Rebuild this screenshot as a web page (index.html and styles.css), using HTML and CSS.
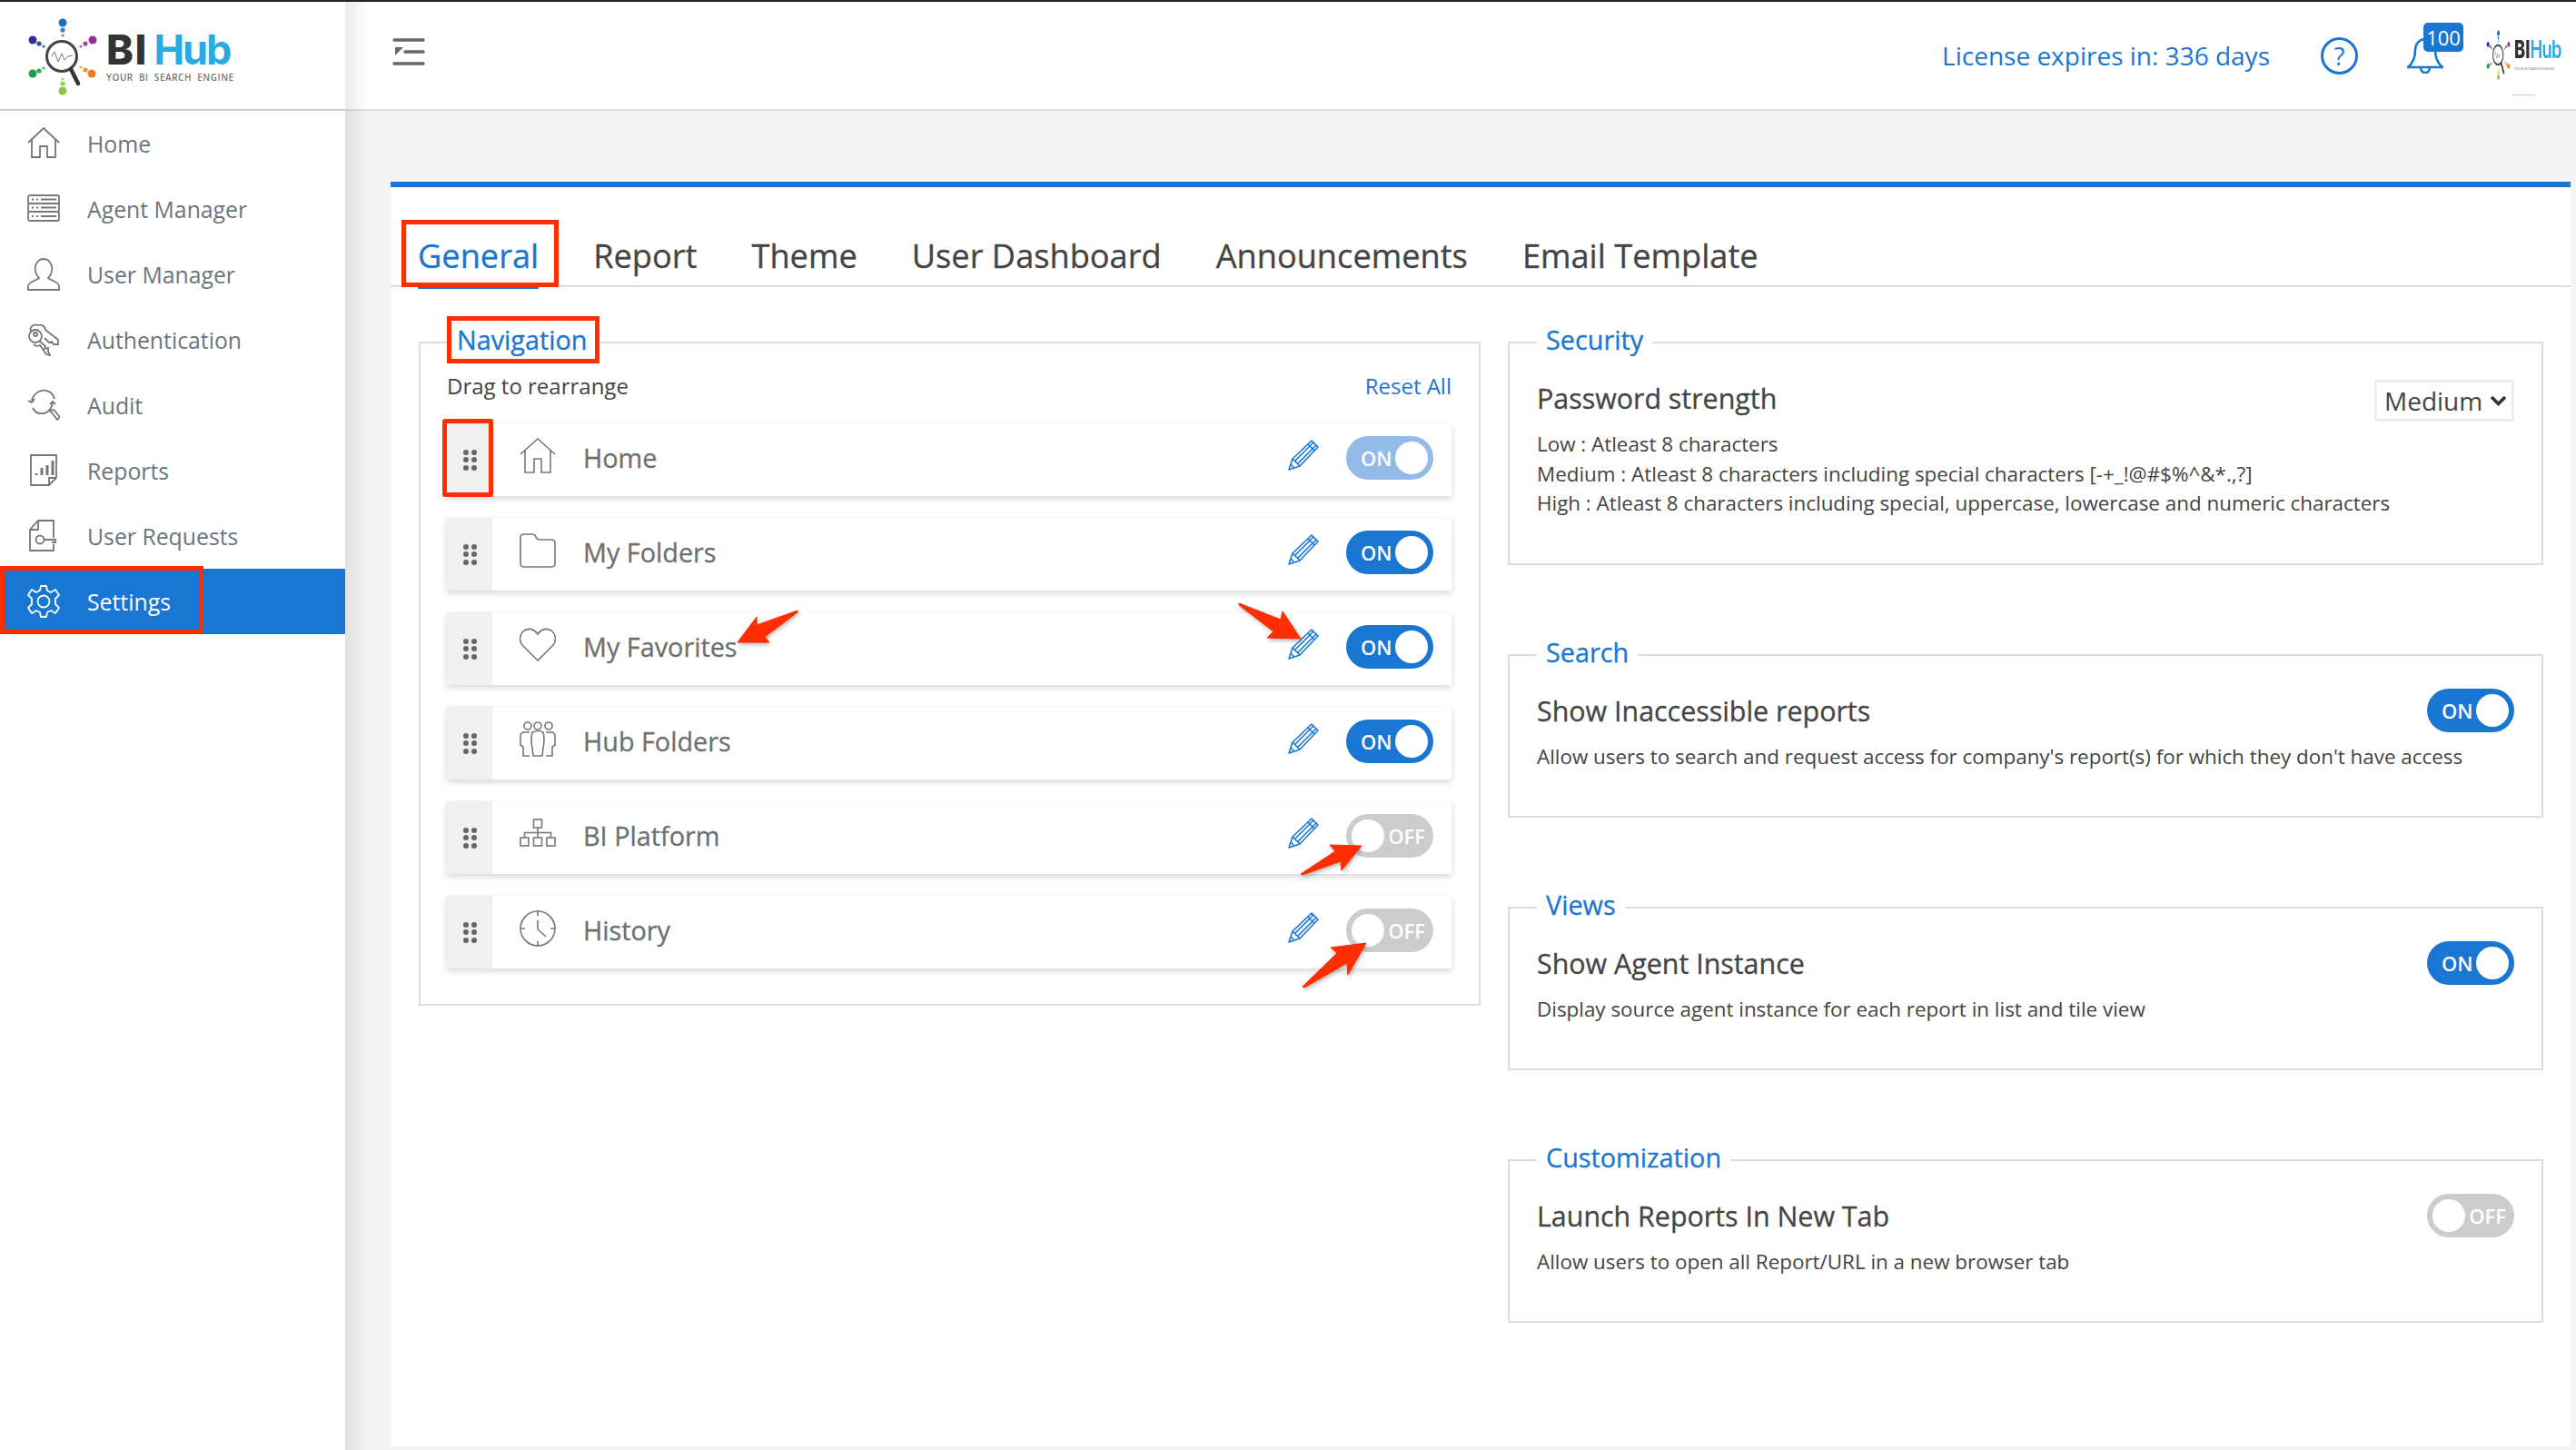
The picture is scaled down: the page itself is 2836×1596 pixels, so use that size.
FILE: index.html
```html
<!DOCTYPE html>
<html lang="en">
<head>
<meta charset="utf-8">
<title>BI Hub Settings</title>
<link rel="stylesheet" href="styles.css">
</head>
<body>
<svg class="defs" width="0" height="0">
  <defs>
    <g id="pencil" fill="none" stroke="#1976d2" stroke-width="1.6" stroke-linejoin="round">
      <path d="M1 33 L5 21 L26 1 L33 8 L13 29 Z"/>
      <path d="M5 21 L13 29 M8 23 L28 3 M11 26 L31 6 M22 5 L29 12 M3 27 L7 31"/>
    </g>
    <g id="logo-mark">
      <circle cx="69" cy="25" r="4.5" fill="#1f6fb5"/><circle cx="69" cy="33" r="2.6" fill="#2a86c8"/><circle cx="69" cy="39" r="1.6" fill="#2fa8dc"/>
      <circle cx="36" cy="44" r="4.5" fill="#2e3192"/><circle cx="43" cy="48" r="2.6" fill="#2e4da0"/><circle cx="48" cy="51" r="1.6" fill="#2a6db5"/>
      <circle cx="102" cy="44" r="4.5" fill="#93309a"/><circle cx="94" cy="48" r="2.6" fill="#a244a5"/><circle cx="89" cy="51" r="1.6" fill="#b060b0"/>
      <circle cx="36" cy="81" r="4.5" fill="#1e9b48"/><circle cx="43" cy="78" r="2.6" fill="#2ea84f"/><circle cx="48" cy="75" r="1.6" fill="#4cb85a"/>
      <circle cx="101" cy="81" r="4.5" fill="#f47b20"/><circle cx="94" cy="77" r="2.6" fill="#f79433"/><circle cx="89" cy="74" r="1.6" fill="#fab040"/>
      <circle cx="69" cy="100" r="4.5" fill="#8dc63f"/><circle cx="69" cy="92" r="2.6" fill="#9ccf45"/><circle cx="69" cy="87" r="1.6" fill="#bcd84a"/>
      <circle cx="68" cy="62" r="16.5" fill="#fff" stroke="#444" stroke-width="3"/>
      <path d="M78 76 L86 92" stroke="#333" stroke-width="4.5" stroke-linecap="round"/>
      <path d="M57 62 L60 57 L64 68 L68 59 L71 66 L75 62 L80 61" fill="none" stroke="#777" stroke-width="1"/>
    </g>
  </defs>
</svg>

<div class="topline"></div>
<div class="app">
  <aside class="sidebar">
    <div class="brand">
      <svg class="brand-mark" width="84" height="88" viewBox="24 18 84 88"><use href="#logo-mark"/></svg>
      <div class="brand-text">
        <div class="brand-name"><span class="bi">BI</span> <span class="hub">Hub</span></div>
        <div class="brand-tag">YOUR BI SEARCH ENGINE</div>
      </div>
    </div>
    <nav class="menu">
      <a class="menu-item">
        <svg class="menu-icon" viewBox="0 0 36 36"><path d="M1 17 L18 1 L35 17 M5 14 V33 H14 V21 H22 V33 H31 V14"/></svg>Home
      </a>
      <a class="menu-item">
        <svg class="menu-icon" viewBox="0 0 36 36"><rect x="1" y="3" width="34" height="9" rx="2"/><rect x="1" y="12" width="34" height="9" rx="2"/><rect x="1" y="21" width="34" height="10" rx="2"/><path d="M5 7.5 H7 M10 7.5 H12 M15 7.5 H32 M5 16.5 H7 M10 16.5 H12 M15 16.5 H32 M5 26 H7 M10 26 H12 M15 26 H32"/></svg>Agent Manager
      </a>
      <a class="menu-item">
        <svg class="menu-icon" viewBox="0 0 36 36"><path d="M1 35 H35 V31 C35 26 26 25 23 22 C26 19 28 15 27 9 C26 4 22 1 18 1 C14 1 10 4 9 9 C8 15 10 19 13 22 C10 25 1 26 1 31 Z"/></svg>User Manager
      </a>
      <a class="menu-item">
        <svg class="menu-icon" viewBox="0 0 36 36"><circle cx="9" cy="14" r="7"/><circle cx="9" cy="12" r="2"/><path d="M4 9 C2 3 8 0 12 2 C15 1 20 3 20 7 L34 18 V23 L29 23 L27 20 L24 21 L19 16 M13 19 L20 25 L19 28 L23 27 L23 31 L25 35 L21 34 L14 24 C12 25 9 25 7 23"/></svg>Authentication
      </a>
      <a class="menu-item">
        <svg class="menu-icon" viewBox="0 0 36 36"><path d="M1 13 L5 15 L8 11 M5 15 C5 6 14 0 21 2 C26 3 29 7 30 11 M31 17 L28 14 L25 17 M28 14 C28 20 24 26 18 27 C12 28 8 25 6 21"/><path d="M25 24 L30 30 L33 34 L36 31 L29 23 Z"/></svg>Audit
      </a>
      <a class="menu-item">
        <svg class="menu-icon" viewBox="0 0 36 36"><path d="M4 1 H32 V26 L24 34 H4 Z M32 26 H24 V34"/><path class="thick" d="M10 23 V21 M16 23 V15 M22 23 V12 M28 23 V7"/></svg>Reports
      </a>
      <a class="menu-item">
        <svg class="menu-icon" viewBox="0 0 36 36"><path d="M29 20 V1 H12 L3 11 V34 H29 V27 M12 1 V11 H3"/><circle cx="14" cy="22" r="4.5"/><path d="M19 22 H31 V25 H27"/></svg>User Requests
      </a>
      <a class="menu-item is-active">
        <svg class="menu-icon" viewBox="0 0 36 36"><circle cx="18" cy="18" r="6.5"/><path d="M15 1 H21 L22 6 L26 8 L31 5 L35 11 L31 15 V21 L35 25 L31 31 L26 28 L22 30 L21 35 H15 L14 30 L10 28 L5 31 L1 25 L5 21 V15 L1 11 L5 5 L10 8 L14 6 Z" stroke-linejoin="round"/></svg>Settings
      </a>
    </nav>
  </aside>

  <div class="main">
    <header class="topbar">
      <svg class="collapse" width="36" height="30" viewBox="0 0 36 30"><path d="M2 2 H34 M14 15 H34 M2 28 H34" stroke="#666" stroke-width="3.4" stroke-linecap="round"/><path d="M3 10 H12 L3 19 Z" fill="#666"/></svg>
      <div class="top-right">
        <span class="license">License expires in: 336 days</span>
        <span class="help">?</span>
        <span class="bell">
          <svg width="40" height="40" viewBox="0 0 40 40" fill="none" stroke="#1976d2" stroke-width="2.6"><path d="M1 33 H39 C33 28 31 20 31 14 C31 7 26 2 20 2 C14 2 9 7 9 14 C9 20 7 28 1 33 Z M15 33 C15 41 25 41 25 33"/></svg>
          <span class="badge">100</span>
        </span>
        <div class="avatar">
          <svg width="29" height="57" viewBox="24 18 84 88" preserveAspectRatio="none"><use href="#logo-mark"/></svg>
          <div class="avatar-text">
            <div class="avatar-name"><span class="bi">BI</span><span class="hub">Hub</span></div>
            <div class="avatar-tag">YOUR BI SEARCH ENGINE</div>
          </div>
        </div>
      </div>
    </header>

    <section class="panel">
      <div class="tabs">
        <span class="tab is-active">General</span>
        <span class="tab">Report</span>
        <span class="tab">Theme</span>
        <span class="tab">User Dashboard</span>
        <span class="tab">Announcements</span>
        <span class="tab">Email Template</span>
      </div>
      <div class="columns">
        <fieldset class="box nav-box">
          <legend class="legend">Navigation</legend>
          <div class="nav-head"><span>Drag to rearrange</span><a class="reset">Reset All</a></div>
          <div class="nav-list">
            <div class="nav-row">
              <span class="handle"><i></i><i></i><i></i><i></i><i></i><i></i></span>
              <svg class="row-icon" viewBox="0 0 40 40"><path d="M1 18 L20 1 L39 18 M6 14 V38 H16 V23 H24 V38 H34 V14"/></svg>
              <span class="row-label">Home</span>
              <svg class="row-edit" viewBox="0 0 34 34"><use href="#pencil"/></svg>
              <span class="toggle on dim"><b>ON</b><i></i></span>
            </div>
            <div class="nav-row">
              <span class="handle"><i></i><i></i><i></i><i></i><i></i><i></i></span>
              <svg class="row-icon" viewBox="0 0 40 40"><path d="M1 6 Q1 2 5 2 H14 Q17 2 18 5 Q19 8 22 8 H35 Q39 8 39 12 V34 Q39 38 35 38 H5 Q1 38 1 34 Z"/></svg>
              <span class="row-label">My Folders</span>
              <svg class="row-edit" viewBox="0 0 34 34"><use href="#pencil"/></svg>
              <span class="toggle on"><b>ON</b><i></i></span>
            </div>
            <div class="nav-row">
              <span class="handle"><i></i><i></i><i></i><i></i><i></i><i></i></span>
              <svg class="row-icon" viewBox="0 0 40 40"><path d="M20 37 L3 20 C-1 15 0 8 5 4 C10 1 16 2 20 8 C24 2 30 1 35 4 C40 8 41 15 37 20 Z"/></svg>
              <span class="row-label">My Favorites</span>
              <svg class="row-edit" viewBox="0 0 34 34"><use href="#pencil"/></svg>
              <span class="toggle on"><b>ON</b><i></i></span>
            </div>
            <div class="nav-row">
              <span class="handle"><i></i><i></i><i></i><i></i><i></i><i></i></span>
              <svg class="row-icon" viewBox="0 0 40 40"><circle cx="9" cy="5" r="4"/><circle cx="20" cy="5" r="4"/><circle cx="32" cy="5" r="4"/><path d="M11 12 H4 Q1 13 1 17 V26 L4 28 V38 H11 M29 12 H36 Q39 13 39 17 V26 L36 28 V38 H29 M14 12 Q20 9 26 12 Q28 20 26 29 L25 38 H15 L14 29 Q12 20 14 12 Z"/></svg>
              <span class="row-label">Hub Folders</span>
              <svg class="row-edit" viewBox="0 0 34 34"><use href="#pencil"/></svg>
              <span class="toggle on"><b>ON</b><i></i></span>
            </div>
            <div class="nav-row">
              <span class="handle"><i></i><i></i><i></i><i></i><i></i><i></i></span>
              <svg class="row-icon" viewBox="0 0 40 40"><rect x="15.5" y="4" width="9" height="9"/><rect x="1" y="24" width="9" height="9"/><rect x="15.5" y="24" width="9" height="9"/><rect x="30" y="24" width="9" height="9"/><path d="M20 13 V24 M5.5 24 V18.5 H34.5 V24"/></svg>
              <span class="row-label">BI Platform</span>
              <svg class="row-edit" viewBox="0 0 34 34"><use href="#pencil"/></svg>
              <span class="toggle off"><i></i><b>OFF</b></span>
            </div>
            <div class="nav-row">
              <span class="handle"><i></i><i></i><i></i><i></i><i></i><i></i></span>
              <svg class="row-icon" viewBox="0 0 40 40"><circle cx="20" cy="20" r="19"/><path d="M20 1 V6 M20 34 V39 M1 20 H6 M34 20 H39 M20 11 V21 L29 29"/></svg>
              <span class="row-label">History</span>
              <svg class="row-edit" viewBox="0 0 34 34"><use href="#pencil"/></svg>
              <span class="toggle off"><i></i><b>OFF</b></span>
            </div>
          </div>
        </fieldset>

        <div class="side-col">
          <fieldset class="box setting security">
            <legend class="legend">Security</legend>
            <div class="setting-head">
              <span class="setting-title">Password strength</span>
              <span class="select">Medium<svg width="19" height="12" viewBox="0 0 19 12"><path d="M2 2 L9.5 9.5 L17 2" fill="none" stroke="#333" stroke-width="3.6"/></svg></span>
            </div>
            <p class="setting-desc lines">Low : Atleast 8 characters<br>Medium : Atleast 8 characters including special characters [-+_!@#$%^&amp;*.,?]<br>High : Atleast 8 characters including special, uppercase, lowercase and numeric characters</p>
          </fieldset>
          <fieldset class="box setting">
            <legend class="legend">Search</legend>
            <div class="setting-head">
              <span class="setting-title">Show Inaccessible reports</span>
              <span class="toggle on"><b>ON</b><i></i></span>
            </div>
            <p class="setting-desc">Allow users to search and request access for company's report(s) for which they don't have access</p>
          </fieldset>
          <fieldset class="box setting">
            <legend class="legend">Views</legend>
            <div class="setting-head">
              <span class="setting-title">Show Agent Instance</span>
              <span class="toggle on"><b>ON</b><i></i></span>
            </div>
            <p class="setting-desc">Display source agent instance for each report in list and tile view</p>
          </fieldset>
          <fieldset class="box setting">
            <legend class="legend">Customization</legend>
            <div class="setting-head">
              <span class="setting-title">Launch Reports In New Tab</span>
              <span class="toggle off"><i></i><b>OFF</b></span>
            </div>
            <p class="setting-desc">Allow users to open all Report/URL in a new browser tab</p>
          </fieldset>
        </div>
      </div>
    </section>
  </div>
</div>

<div class="mark mark-settings"></div>
<div class="mark mark-general"></div>
<div class="mark mark-nav"></div>
<div class="mark mark-handle"></div>
<svg class="arrows" width="2836" height="1596" viewBox="0 0 2836 1596">
  <g fill="#ff2d00" stroke="#ff2d00" stroke-width="1" stroke-linejoin="round">
    <polygon points="812,707 833,679 833,688 878,672 878,674 842,701 847,707"/>
    <polygon points="1364,664 1410,682 1412,673 1432,703 1395,702 1402,695 1364,666"/>
    <polygon points="1499,931 1464,930 1470,937 1432,962 1434,963 1476,948 1477,958"/>
    <polygon points="1504,1038 1465,1043 1472,1049 1434,1086 1436,1087 1483,1060 1484,1073"/>
  </g>
</svg>
</body>
</html>
```
FILE: styles.css
```css
* { box-sizing: border-box; }
html, body { margin: 0; padding: 0; }
body {
  width: 2836px;
  height: 1596px;
  overflow: hidden;
  background: #f4f4f4;
  font-family: "Open Sans", sans-serif;
  color: #444;
  position: relative;
}
.defs { position: absolute; }
.topline { height: 2px; background: #222; }
.app { display: flex; height: 1594px; }

.sidebar {
  width: 380px;
  flex: none;
  background: #fff;
  position: relative;
  z-index: 1;
}
.sidebar::after {
  content: "";
  position: absolute;
  top: 0;
  bottom: 0;
  left: 100%;
  width: 26px;
  background: linear-gradient(to right, rgba(0, 0, 0, .08), rgba(0, 0, 0, 0));
}
.brand {
  height: 120px;
  border-bottom: 2px solid #ccc;
  display: flex;
  align-items: flex-start;
  padding: 16px 0 0 24px;
}
.brand-mark { flex: none; margin-right: 9px; }
.brand-text { padding-top: 15px; }
.brand-name {
  font-family: "Inter", "Liberation Sans", sans-serif;
  font-size: 45px;
  line-height: 44px;
  font-weight: 700;
  white-space: nowrap;
  word-spacing: -4px;
}
.bi { color: #333; font-weight: 800; letter-spacing: 1.5px; }
.hub { color: #29abe2; letter-spacing: -2px; }
.brand-tag {
  font-size: 10px;
  line-height: 12px;
  margin-top: 2px;
  font-weight: 600;
  color: #777;
  letter-spacing: .55px;
  word-spacing: 3px;
  white-space: nowrap;
}
.menu { display: flex; flex-direction: column; }
.menu-item {
  height: 72px;
  display: flex;
  align-items: center;
  gap: 30px;
  padding-left: 30px;
  font-size: 24.8px;
  color: #6c757d;
}
.menu-icon {
  width: 36px;
  height: 36px;
  flex: none;
  fill: none;
  stroke: #777;
  stroke-width: 1.8;
}
.menu-icon .thick { stroke-width: 3; }
.menu-item.is-active { background: #1976d2; color: #fff; }
.is-active .menu-icon { stroke: #fff; }

.main { flex: 1; min-width: 0; display: flex; flex-direction: column; }
.topbar {
  height: 120px;
  flex: none;
  background: #fff;
  border-bottom: 2px solid #ddd;
  display: flex;
  align-items: center;
  justify-content: space-between;
  padding: 0 14px 0 52px;
}
.collapse { margin-top: -8px; }
.top-right { display: flex; align-items: center; }
.license { font-size: 28px; color: #1976d2; margin-right: 56px; white-space: nowrap; }
.help {
  width: 41px;
  height: 41px;
  border: 3px solid #1976d2;
  border-radius: 50%;
  color: #1976d2;
  font-size: 27px;
  line-height: 35px;
  text-align: center;
  margin-right: 54px;
}
.bell { position: relative; width: 40px; height: 40px; margin-right: 45px; }
.badge {
  position: absolute;
  left: 18px;
  top: -16px;
  width: 44px;
  height: 32px;
  background: #1976d2;
  border-radius: 5px;
  color: #fff;
  font-size: 22px;
  line-height: 32px;
  text-align: center;
}
.avatar { display: flex; align-items: center; width: 87px; position: relative; margin-top: -2px; }
.avatar::after {
  content: "";
  position: absolute;
  left: 30px;
  top: 72px;
  width: 26px;
  height: 1px;
  background: #ccc;
}
.avatar svg { flex: none; margin-right: 4px; }
.avatar-text { width: 54px; }
.avatar-name {
  font-family: "Inter", "Liberation Sans", sans-serif;
  font-size: 27px;
  line-height: 26px;
  font-weight: 600;
  white-space: nowrap;
  transform: scaleX(.68);
  transform-origin: left center;
}
.avatar-name .bi { letter-spacing: 0; }
.avatar-name .hub { letter-spacing: -1px; }
.avatar-tag { font-size: 3.8px; line-height: 6px; margin-top: 5px; color: #777; white-space: nowrap; }

.panel {
  background: #fff;
  border-top: 6px solid #1976d2;
  margin: 78px 6px 4px 50px;
  flex: 1;
  padding-top: 40px;
  min-height: 0;
}
.tabs {
  display: flex;
  gap: 60px;
  height: 70px;
  padding-left: 30px;
  border-bottom: 2px solid #ddd;
}
.tab {
  font-size: 36.2px;
  line-height: 70px;
  color: #444;
  height: 72px;
  white-space: nowrap;
  -webkit-text-stroke: .3px currentColor;
}
.tab.is-active { color: #1976d2; border-bottom: 4px solid #1976d2; }

.columns {
  display: flex;
  align-items: flex-start;
  gap: 30px;
  padding: 39px 30px 0 31px;
}
.box {
  margin: 0;
  border: 2px solid #ddd;
  min-width: 0;
  background: #fff;
}
.legend {
  font-size: 28.8px;
  line-height: 38px;
  color: #1976d2;
  padding: 0 10px 6px;
  margin-left: 0;
  -webkit-text-stroke: .3px currentColor;
}
.nav-box {
  width: 1169px;
  height: 752px;
  flex: none;
  padding: 0 30px 0 29px;
}
.nav-box .legend { padding: 0 11px 6px; }
.nav-head {
  display: flex;
  justify-content: space-between;
  font-size: 24px;
  line-height: 34px;
  color: #444;
  margin-top: 9px;
}
.reset { color: #1976d2; }
.nav-list { display: flex; flex-direction: column; gap: 24px; margin-top: 24px; }
.nav-row {
  height: 80px;
  display: flex;
  align-items: center;
  background: #fff;
  box-shadow: 0 3px 7px rgba(0, 0, 0, .16);
  padding-right: 20px;
}
.nav-row .toggle { margin-top: -4px; }
.handle {
  width: 50px;
  height: 80px;
  flex: none;
  background: #f0f0f0;
  display: grid;
  grid-template-columns: 6px 6px;
  grid-auto-rows: 6px;
  column-gap: 3px;
  row-gap: 2.5px;
  align-content: center;
  justify-content: center;
}
.handle i { background: #666; border-radius: 50%; }
.row-icon {
  width: 40px;
  height: 40px;
  flex: none;
  margin: -8px 0 0 30px;
  fill: none;
  stroke: #777;
  stroke-width: 1.6;
}
.row-label {
  font-size: 28.8px;
  color: #6c7070;
  margin: -5px 0 0 30px;
  flex: 1;
  -webkit-text-stroke: .3px currentColor;
}
.row-edit { width: 34px; height: 34px; flex: none; margin-right: 30px; margin-top: -10px; }
.toggle {
  width: 96px;
  height: 48px;
  flex: none;
  border-radius: 24px;
  display: flex;
  align-items: center;
  justify-content: space-between;
  padding: 0 6px;
  font-size: 22px;
  color: #fff;
}
.toggle b { font-weight: 600; }
.toggle i { width: 36px; height: 36px; border-radius: 50%; background: #fff; }
.toggle.on { background: #1976d2; padding-left: 16px; }
.toggle.on.dim { background: #94bbe8; }
.toggle.off { background: #ccc; padding-right: 9px; }

.side-col { flex: 1; display: flex; flex-direction: column; gap: 77px; }
.setting { height: 201px; padding: 0 30px 0 30px; }
.security { height: 267px; }
.setting-head {
  display: flex;
  justify-content: space-between;
  align-items: center;
  height: 48px;
  margin-top: 15px;
}
.setting-title { font-size: 30.4px; color: #444; -webkit-text-stroke: .3px currentColor; }
.setting-desc { margin: 11px 0 0; font-size: 22.4px; line-height: 32.5px; color: #444; }
.select {
  width: 154px;
  height: 46px;
  border: 3px solid #eee;
  display: flex;
  align-items: center;
  justify-content: space-between;
  font-size: 28px;
  padding: 0 5px 0 8px;
  margin-top: 6px;
  color: #444;
}

.mark { position: absolute; z-index: 2; border: 5px solid #ff2d00; pointer-events: none; }
.mark-settings { left: 0; top: 623px; width: 224px; height: 75px; }
.mark-general { left: 442px; top: 242px; width: 173px; height: 74px; }
.mark-nav { left: 492px; top: 348px; width: 168px; height: 52px; }
.mark-handle { left: 487px; top: 461px; width: 56px; height: 86px; border-radius: 3px; }
.arrows { position: absolute; z-index: 3; left: 0; top: 0; pointer-events: none; filter: drop-shadow(1px 2px 2px rgba(0,0,0,.3)); }
```
